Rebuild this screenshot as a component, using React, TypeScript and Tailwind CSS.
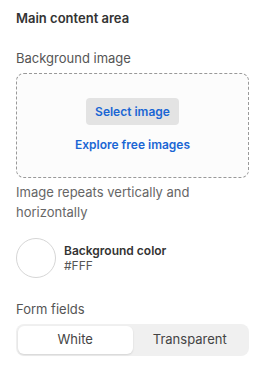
export default function App() {
  return (
    <div className="w-[265px] h-[374px] bg-white px-4 pt-[9px] font-['Inter',sans-serif] text-[13px] text-[#555]">
      <h2 className="text-[13px] font-semibold leading-[18px] text-[#333]">Main content area</h2>

      <div className="mt-[22px] leading-[18px]">Background image</div>
      <div className="mt-[6px] flex h-[105px] flex-col items-center rounded-[8px] border border-dashed border-[#999] bg-[#fcfcfc] pt-[24px]">
        <button className="h-[27px] rounded-[4px] bg-[#e3e3e3] px-[9px] text-[12px] font-semibold text-[#1a66d4]">
          Select image
        </button>
        <div className="mt-[12px] text-[12px] font-semibold leading-[16px] text-[#1a66d4]">Explore free images</div>
      </div>

      <p className="mt-[4px] leading-[20px] text-[#666]">
        Image repeats vertically and horizontally
      </p>

      <div className="mt-[16px] flex items-center gap-[8px]">
        <div className="h-[40px] w-[40px] rounded-full border border-[#d6d6d6] bg-white" />
        <div className="flex flex-col">
          <span className="text-[12px] font-semibold leading-[15px] text-[#333]">Background color</span>
          <span className="text-[12px] leading-[15px] text-[#555]">#FFF</span>
        </div>
      </div>

      <div className="mt-[22px] leading-[18px]">Form fields</div>
      <div className="mt-[6px] flex h-[32px] rounded-[8px] bg-[#f0f0f0] p-[2px] text-[13px]">
        <div className="flex flex-1 items-center justify-center rounded-[6px] bg-white text-[#444] shadow-[0_1px_2px_rgba(0,0,0,0.12)]">
          White
        </div>
        <div className="flex flex-1 items-center justify-center text-[#444]">Transparent</div>
      </div>
    </div>
  )
}
